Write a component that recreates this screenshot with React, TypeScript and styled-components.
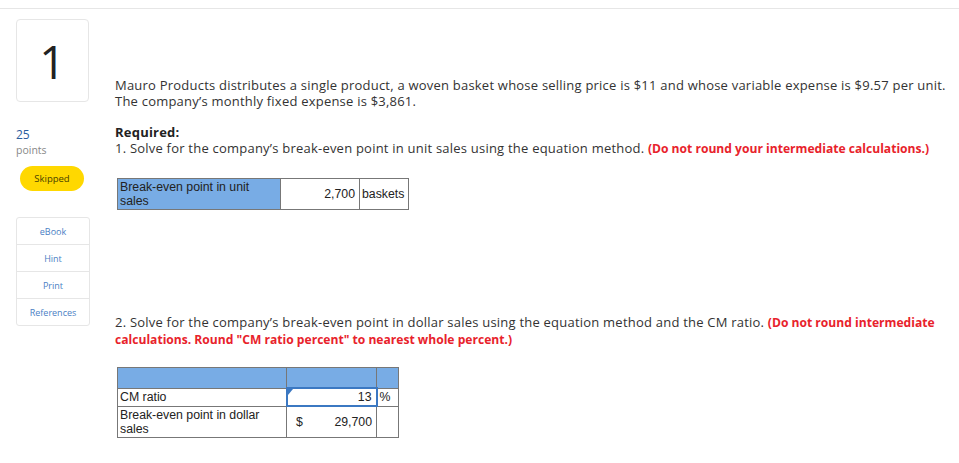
import * as React from 'react';
import styled, { createGlobalStyle } from 'styled-components';

const GlobalStyle = createGlobalStyle`
  html, body {
    margin: 0;
    padding: 0;
    background: #fff;
  }
  body {
    font-family: "Open Sans", "Noto Sans", sans-serif;
    color: #333;
  }
`;

const Page = styled.div`
  border-top: 1px solid #e6e6e6;
  margin-top: 8px;
  display: flex;
  padding-left: 16px;
`;

const Sidebar = styled.div`
  width: 73px;
  display: flex;
  flex-direction: column;
  padding-top: 10px;
`;

const NumberBox = styled.div`
  width: 71px;
  height: 81px;
  border: 1px solid #e6e6e6;
  border-radius: 4px;
  display: flex;
  align-items: center;
  justify-content: center;
  font-size: 46px;
  font-weight: 400;
  color: #222;
`;

const Points = styled.div`
  margin-top: 25px;
  font-size: 12px;
  color: #2b5d9e;
  line-height: 16px;
`;

const PointsLabel = styled.div`
  font-size: 10.5px;
  color: #888;
  line-height: 14px;
`;

const Pill = styled.div`
  margin: 9px 0 0 4px;
  width: 64px;
  height: 25px;
  border-radius: 13px;
  background: #ffd800;
  color: #4a4200;
  font-size: 9.5px;
  display: flex;
  align-items: center;
  justify-content: center;
`;

const Menu = styled.div`
  margin-top: 26px;
  width: 72px;
  border: 1px solid #e6e6e6;
  border-radius: 3px;
  display: flex;
  flex-direction: column;
`;

const MenuItem = styled.div<{ $last?: boolean }>`
  height: 26px;
  display: flex;
  align-items: center;
  justify-content: center;
  font-size: 9px;
  color: #4a80c4;
  border-bottom: ${(p) => (p.$last ? 'none' : '1px solid #e6e6e6')};
`;

const Main = styled.div`
  flex: 1;
  padding: 68px 0 0 26px;
  font-size: 13px;
  letter-spacing: 0.22px;
  line-height: 16px;
`;

const Para = styled.p<{ $gap?: number }>`
  margin: 0;
  margin-top: ${(p) => p.$gap ?? 0}px;
`;

const Bold = styled.span`
  font-weight: 700;
  color: #222;
`;

const Red = styled.span`
  font-weight: 700;
  font-size: 12.1px;
  letter-spacing: 0;
  color: #e8222b;
`;

const Grid = styled.table<{ $top: number }>`
  margin: ${(p) => p.$top}px 0 0 2px;
  width: 10px;
  border-collapse: collapse;
  table-layout: fixed;
  border: 1px solid #777;
  font-family: "Liberation Sans", Arial, sans-serif;
  font-size: 12.3px;
  letter-spacing: 0;
  line-height: 14px;
  color: #222;
`;

const Label = styled.td<{ $w?: number; $blue?: boolean }>`
  width: ${(p) => (p.$w ? `${p.$w}px` : 'auto')};
  padding: 1px 2px;
  background: ${(p) => (p.$blue ? '#78ace5' : '#fff')};
  border: 1px solid #777;
  vertical-align: middle;
`;

const Input = styled.td<{ $w?: number; $solid?: boolean }>`
  width: ${(p) => (p.$w ? `${p.$w}px` : 'auto')};
  padding: 1px 4px;
  text-align: right;
  border: ${(p) => (p.$solid ? '2px solid #3b78c2' : '1px dotted #3b78c2')};
  vertical-align: middle;
  position: relative;
`;

const Unit = styled.td<{ $w?: number }>`
  width: ${(p) => (p.$w ? `${p.$w}px` : 'auto')};
  padding: 1px 2px;
  border: 1px solid #777;
  vertical-align: middle;
`;

const HeadCell = styled.td<{ $w: number }>`
  width: ${(p) => p.$w}px;
  height: 19px;
  padding: 0;
  background: #78ace5;
  border: 1px solid #777;
`;

const Money = styled.div`
  display: flex;
  justify-content: space-between;
  padding-left: 5px;
`;

const Flag = styled.span`
  position: absolute;
  left: 0;
  top: 0;
  width: 0;
  height: 0;
  border-top: 6px solid #3b78c2;
  border-right: 5px solid transparent;
`;

export default function App() {
  return (
    <>
      <GlobalStyle />
      <Page>
        <Sidebar>
          <NumberBox>1</NumberBox>
          <Points>25</Points>
          <PointsLabel>points</PointsLabel>
          <Pill>Skipped</Pill>
          <Menu>
            <MenuItem>eBook</MenuItem>
            <MenuItem>Hint</MenuItem>
            <MenuItem>Print</MenuItem>
            <MenuItem $last>References</MenuItem>
          </Menu>
        </Sidebar>
        <Main>
          <Para>
            Mauro Products distributes a single product, a woven basket whose selling price is $11 and whose variable expense is $9.57 per unit.
            <br />
            The company’s monthly fixed expense is $3,861.
          </Para>
          <Para $gap={15}>
            <Bold>Required:</Bold>
            <br />
            1. Solve for the company’s break-even point in unit sales using the equation method.{' '}
            <Red>(Do not round your intermediate calculations.)</Red>
          </Para>
          <Grid $top={21}>
            <tbody>
              <tr>
                <Label $w={158} $blue>Break-even point in unit sales</Label>
                <Input $w={70}>2,700</Input>
                <Unit $w={44}>baskets</Unit>
              </tr>
            </tbody>
          </Grid>
          <Para $gap={104}>
            2. Solve for the company’s break-even point in dollar sales using the equation method and the CM ratio.{' '}
            <Red>(Do not round intermediate calculations. Round "CM ratio percent" to nearest whole percent.)</Red>
          </Para>
          <Grid $top={19}>
            <tbody>
              <tr>
                <HeadCell $w={168} />
                <HeadCell $w={89} />
                <HeadCell $w={21} />
              </tr>
              <tr>
                <Label>CM ratio</Label>
                <Input $solid>
                  <Flag />
                  13
                </Input>
                <Unit>%</Unit>
              </tr>
              <tr>
                <Label>Break-even point in dollar sales</Label>
                <Input>
                  <Money>
                    <span>$</span>
                    <span>29,700</span>
                  </Money>
                </Input>
                <Unit />
              </tr>
            </tbody>
          </Grid>
        </Main>
      </Page>
    </>
  );
}
